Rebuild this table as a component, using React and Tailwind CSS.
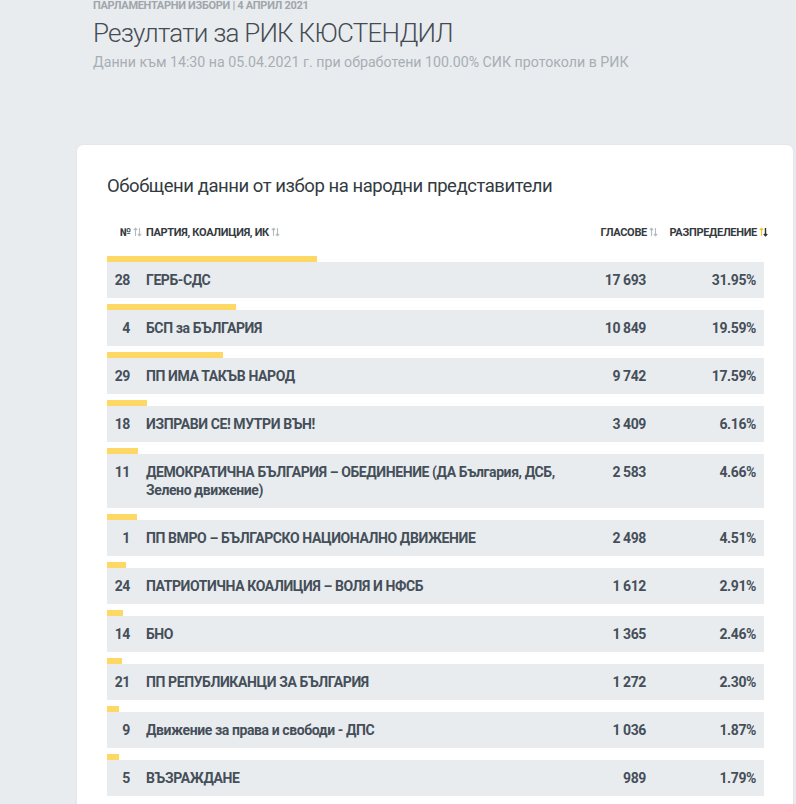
import React from "react";

const rows = [
  { no: 28, name: "ГЕРБ-СДС", votes: "17 693", pct: 31.95 },
  { no: 4, name: "БСП за БЪЛГАРИЯ", votes: "10 849", pct: 19.59 },
  { no: 29, name: "ПП ИМА ТАКЪВ НАРОД", votes: "9 742", pct: 17.59 },
  { no: 18, name: "ИЗПРАВИ СЕ! МУТРИ ВЪН!", votes: "3 409", pct: 6.16 },
  {
    no: 11,
    name: "ДЕМОКРАТИЧНА БЪЛГАРИЯ – ОБЕДИНЕНИЕ (ДА България, ДСБ, Зелено движение)",
    votes: "2 583",
    pct: 4.66,
  },
  { no: 1, name: "ПП ВМРО – БЪЛГАРСКО НАЦИОНАЛНО ДВИЖЕНИЕ", votes: "2 498", pct: 4.51 },
  { no: 24, name: "ПАТРИОТИЧНА КОАЛИЦИЯ – ВОЛЯ И НФСБ", votes: "1 612", pct: 2.91 },
  { no: 14, name: "БНО", votes: "1 365", pct: 2.46 },
  { no: 21, name: "ПП РЕПУБЛИКАНЦИ ЗА БЪЛГАРИЯ", votes: "1 272", pct: 2.3 },
  { no: 9, name: "Движение за права и свободи - ДПС", votes: "1 036", pct: 1.87 },
  { no: 5, name: "ВЪЗРАЖДАНЕ", votes: "989", pct: 1.79 },
];

const SortIcon = ({ active = false }) => (
  <svg width="9" height="10" viewBox="0 0 9 10" className="ml-[2px] -mt-[3px] inline-block" fill="none">
    <g stroke={active ? "#f5c518" : "#b4b9be"} strokeWidth="1.1">
      <path d="M2.5 9V1.2" />
      <path d="M0.8 3L2.5 1.2L4.2 3" />
    </g>
    <g stroke={active ? "#333" : "#b4b9be"} strokeWidth={active ? "1.4" : "1.1"}>
      <path d="M6.5 1V8.8" />
      <path d="M4.8 7L6.5 8.8L8.2 7" />
    </g>
  </svg>
);

const App = () => {
  return (
    <div
      className="min-h-screen bg-[#e9ecef] overflow-hidden"
      style={{ fontFamily: "Roboto, 'Noto Sans', sans-serif" }}
    >
      <div className="ml-[77px] mr-[3px]">
        <div className="pl-4 -mt-[1px]">
          <div className="text-[11px] font-bold uppercase text-[#a0a6ab] tracking-[-0.3px] leading-[14px]">
            ПАРЛАМЕНТАРНИ ИЗБОРИ | 4 АПРИЛ 2021
          </div>
          <h1 className="mt-[4px] text-[26px] font-light text-[#454b52] leading-[32px] tracking-[-0.8px]">
            Резултати за РИК КЮСТЕНДИЛ
          </h1>
          <p className="mt-[3px] text-[14.2px] text-[#a7aeb4] leading-[20px]">
            Данни към 14:30 на 05.04.2021 г. при обработени 100.00% СИК протоколи в РИК
          </p>
        </div>

        <div className="mt-[73px] bg-white rounded-[6px] shadow-[0_0_2px_rgba(0,0,0,0.08)] pl-[30px] pr-[29px] pt-[28px] pb-8">
          <h2 className="text-[18.5px] text-[#333a40] leading-[26px] tracking-[-0.45px]">
            Обобщени данни от избор на народни представители
          </h2>

          <div className="mt-[26px] grid grid-cols-[39px_1fr_70px_118px] items-center text-[11px] font-bold uppercase text-[#343a40] leading-[16px] tracking-[-0.3px]">
            <div className="pl-[13px] whitespace-nowrap">
              №<SortIcon />
            </div>
            <div className="whitespace-nowrap">
              Партия, коалиция, ИК<SortIcon />
            </div>
            <div className="text-right whitespace-nowrap -mr-[12px]">
              Гласове<SortIcon />
            </div>
            <div className="text-right whitespace-nowrap -mr-[4px]">
              Разпределение<SortIcon active />
            </div>
          </div>

          <div className="mt-[15px] flex flex-col gap-[6px]">
            {rows.map((r) => (
              <div key={r.no}>
                <div
                  className="h-[6px] bg-[#fdd865]"
                  style={{ width: `${r.pct}%` }}
                />
                <div className="grid grid-cols-[39px_1fr_70px_118px] bg-[#e9ecef] py-[9px] text-[14px] font-bold text-[#454f59] leading-[18px] tracking-[-0.4px]">
                  <div className="text-right pr-4">{r.no}</div>
                  <div className="pr-1">{r.name}</div>
                  <div className="text-right">{r.votes}</div>
                  <div className="text-right pr-2">{r.pct.toFixed(2)}%</div>
                </div>
              </div>
            ))}
          </div>
        </div>
      </div>
    </div>
  );
};

export default App;
